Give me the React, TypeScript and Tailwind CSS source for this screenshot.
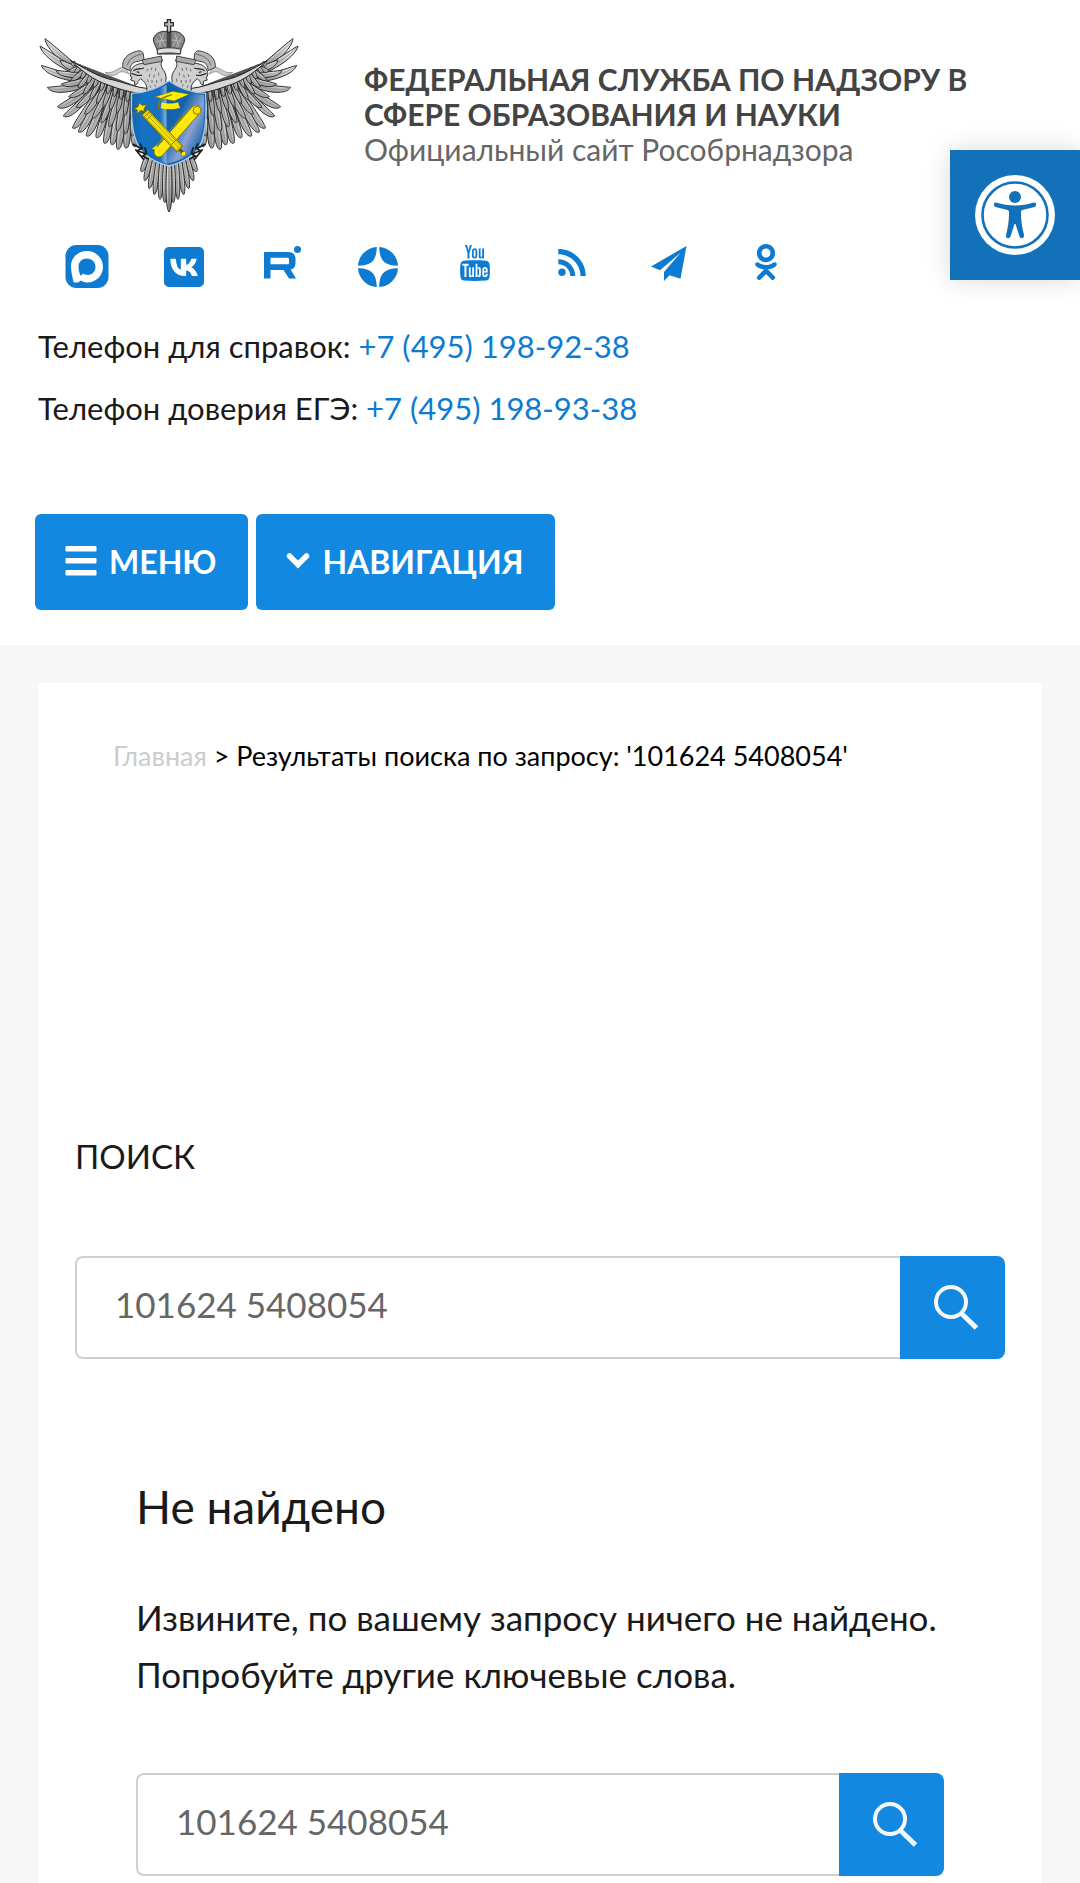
import { useState } from 'react'
import type { ReactNode } from 'react'
import { FaOdnoklassniki } from 'react-icons/fa'
import { TfiYoutube } from 'react-icons/tfi'

type Point = [number, number]

interface FeatherRow {
  roots: Point[]
  tips: Point[]
  width: number
  bend: number
}

const wingRows: FeatherRow[] = [
  {
    width: 12,
    bend: 12,
    roots: [[185, 215], [190, 225], [195, 240], [200, 252], [208, 262], [215, 272], [225, 285], [235, 295], [248, 305], [262, 312], [278, 320], [294, 325], [310, 330], [326, 335], [340, 340]],
    tips: [[75, 116], [60, 138], [64, 196], [82, 262], [112, 320], [130, 348], [158, 384], [176, 396], [200, 408], [230, 413], [254, 430], [276, 434], [294, 448], [318, 444], [345, 440]],
  },
  {
    width: 10,
    bend: 8,
    roots: [[195, 215], [205, 225], [215, 232], [228, 240], [240, 250], [252, 258], [266, 265], [280, 272], [295, 280], [310, 290], [325, 300], [340, 310]],
    tips: [[120, 180], [108, 212], [124, 252], [146, 290], [168, 322], [194, 342], [218, 354], [244, 368], [268, 380], [292, 394], [316, 402], [338, 408]],
  },
  {
    width: 8,
    bend: 4,
    roots: [[180, 200], [196, 208], [212, 216], [228, 224], [244, 232], [260, 240], [276, 248], [292, 254], [308, 260], [324, 266], [342, 272]],
    tips: [[148, 212], [154, 240], [174, 262], [190, 282], [210, 298], [230, 310], [250, 320], [270, 330], [292, 338], [314, 348], [336, 356]],
  },
  {
    width: 7,
    bend: 2,
    roots: [[165, 186], [182, 196], [200, 204], [218, 214], [236, 224], [254, 232], [272, 240], [290, 248], [308, 254], [326, 260], [344, 268]],
    tips: [[156, 196], [166, 218], [184, 236], [202, 250], [222, 262], [242, 272], [262, 282], [282, 290], [302, 298], [322, 306], [340, 314]],
  },
]

const tailRow: FeatherRow = {
  width: 9,
  bend: 4,
  roots: [[385, 460], [395, 465], [405, 470], [415, 475], [425, 478], [436, 480]],
  tips: [[364, 515], [374, 542], [388, 566], [403, 584], [420, 598], [434, 608]],
}

function featherPath([x1, y1]: Point, [x2, y2]: Point, width: number, bend = 0) {
  const dx = x2 - x1
  const dy = y2 - y1
  const len = Math.hypot(dx, dy)
  const nx = -dy / len
  const ny = dx / len
  const at = (t: number, side: number) =>
    `${(x1 + dx * t + nx * side).toFixed(1)} ${(y1 + dy * t + ny * side + bend).toFixed(1)}`
  const root = (side: number) => `${(x1 + nx * side).toFixed(1)} ${(y1 + ny * side).toFixed(1)}`
  return `M${root(width * 0.5)} C${at(0.4, width)} ${at(0.9, width)} ${x2} ${y2} C${at(0.9, -width)} ${at(0.4, -width)} ${root(-width * 0.5)}Z`
}

function Feathers({ row }: { row: FeatherRow }) {
  return (
    <>
      {row.tips.map((tip, index) => (
        <g key={index}>
          <path d={featherPath(row.roots[index], tip, row.width, row.bend)} fill="url(#feather)" stroke="#2b2b2b" strokeWidth="3" />
          <path d={featherPath(row.roots[index], tip, 0.5, row.bend)} fill="none" stroke="#777" strokeWidth="1" />
        </g>
      ))}
    </>
  )
}

function EagleHalf() {
  return (
    <g>
      <path d="M160 185 L380 270 L380 440 L320 400 L220 330 L170 250Z" fill="#555" />
      {wingRows.map((row, index) => (
        <Feathers key={index} row={row} />
      ))}
      <path d="M152 182 C195 205 235 232 280 240 C315 248 345 262 385 266 L383 282 C330 280 290 264 262 254 C220 240 185 212 152 182Z" fill="#d6d6d6" stroke="#222" strokeWidth="3" />
      {/* ribbon */}
      <path d="M256 217 C280 222 288 206 308 201 C318 205 322 212 326 222 C310 212 300 214 292 222 C280 230 266 226 256 217Z" fill="#ccc" stroke="#777" strokeWidth="2" />
      <path d="M308 202 C306 176 324 160 350 154 C360 150 368 154 370 162 L372 180 L346 186 C334 190 330 200 330 212Z" fill="#b5b5b5" stroke="#444" strokeWidth="3" />
      <path d="M322 196 C326 176 342 168 366 162" fill="none" stroke="#666" strokeWidth="3" />
      {/* head and neck */}
      <path d="M380 274 C384 254 372 244 362 236 L354 244 C354 250 350 254 344 256 L344 244 L332 240 L336 232 C328 230 330 214 336 206 C344 194 358 190 374 190 C390 182 402 178 428 180 C418 194 426 204 434 216 C440 228 440 240 434 254 C420 258 402 270 380 274Z" fill="#cfcfcf" stroke="#333" strokeWidth="3" />
      <path d="M366 180 L424 168 L426 184 L372 194Z" fill="#aaa" stroke="#444" strokeWidth="3" />
      <path d="M340 212 C350 204 362 208 372 204 M334 220 L352 226 L366 226 M350 215 L358 218" fill="none" stroke="#333" strokeWidth="4" />
      <path d="M384 206 l-4 8 M396 202 l-3 9 M408 204 l-2 9 M390 222 l-3 9 M403 224 l-2 9 M416 218 l0 9 M382 238 l3 8 M396 240 l0 9 M410 240 l0 9 M424 236 l0 9 M390 256 l2 7 M405 253 l1 7" stroke="#555" strokeWidth="2.4" />
    </g>
  )
}

function Emblem() {
  return (
    <svg viewBox="54 54 786 594" className="w-[262px] shrink-0" role="img" aria-label="Рособрнадзор">
      <defs>
        <linearGradient id="feather" x1="0" y1="0" x2="1" y2="1">
          <stop offset="0" stopColor="#f4f4f4" />
          <stop offset="0.5" stopColor="#bdbdbd" />
          <stop offset="1" stopColor="#747474" />
        </linearGradient>
        <linearGradient id="shieldLeft" x1="0" y1="0" x2="1" y2="0">
          <stop offset="0" stopColor="#1665ae" />
          <stop offset="0.3" stopColor="#1573c4" />
          <stop offset="0.8" stopColor="#176fbd" />
          <stop offset="1" stopColor="#8fb4dc" />
        </linearGradient>
        <linearGradient id="shieldRight" x1="0" y1="0" x2="1" y2="1">
          <stop offset="0" stopColor="#0f5ca3" />
          <stop offset="0.35" stopColor="#1565ad" />
          <stop offset="0.6" stopColor="#8da0d2" />
          <stop offset="0.85" stopColor="#1565ad" />
        </linearGradient>
      </defs>

      <Feathers row={tailRow} />
      <g transform="matrix(-1 0 0 1 894 0)">
        <Feathers row={tailRow} />
      </g>
      <path d={featherPath([447, 485], [447, 636], 11)} fill="url(#feather)" stroke="#252525" strokeWidth="3" />
      <path d="M447 500 V625" stroke="#444" strokeWidth="2" />
      <EagleHalf />
      <g transform="matrix(-1 0 0 1 894 0)">
        <EagleHalf />
      </g>

      {/* crown */}
      <path d="M447 96 C432 90 404 96 400 118 C400 132 412 142 414 162 H480 C482 142 494 132 494 118 C490 96 462 90 447 96Z" fill="#858585" stroke="#333" strokeWidth="3" />
      <path d="M408 112 L426 142 M418 102 L436 140 M430 100 L418 140 M486 112 L468 142 M476 102 L458 140 M464 100 L476 140 M406 126 C430 118 464 118 488 126" stroke="#c8c8c8" strokeWidth="2" fill="none" />
      <path d="M440 96 H454 V146 H440Z" fill="#444" />
      <path d="M412 148 C430 142 464 142 482 148 V162 C464 158 430 158 412 162Z" fill="#ddd" stroke="#333" strokeWidth="3" />
      <path d="M442 59 H452 V68 H460 V78 H452 V96 H442 V78 H434 V68 H442Z" fill="#bbb" stroke="#222" strokeWidth="3.5" />

      {/* shield */}
      <path d="M447 242 C418 264 378 278 335 280 C332 340 336 404 356 440 C376 474 416 490 447 498 C478 490 518 474 538 440 C558 404 560 340 557 280 C516 278 476 264 447 242Z" fill="#1565ad" stroke="#a9cdf0" strokeWidth="4" />
      <path d="M440 254 C412 270 376 282 340 285 C337 345 342 402 360 436 C378 466 412 484 440 491Z" fill="url(#shieldLeft)" />
      <path d="M440 254 C478 270 518 282 552 285 C555 345 552 402 534 436 C516 466 478 484 440 491Z" fill="url(#shieldRight)" />

      {/* graduation cap */}
      <path d="M404 291 L458 274 L508 283 L462 303Z" fill="#ffef08" stroke="#6b6500" strokeWidth="1.5" />
      <path d="M425 307 C440 312 460 312 474 307 L480 324 C462 328 444 330 422 325Z" fill="#ffef08" />
      <path d="M456 284 C430 292 414 294 416 326" fill="none" stroke="#8b8200" strokeWidth="4" />

      {/* scroll */}
      <g strokeLinecap="round">
        <path d="M417 456 L528 330" stroke="#837a00" strokeWidth="31" />
        <path d="M417 456 L528 330" stroke="#ffe90a" strokeWidth="27" />
        <path d="M404 442 L510 324 M398 446 L412 434" stroke="#a89c00" strokeWidth="2.5" />
        <circle cx="531" cy="331" r="12" fill="#f3df12" stroke="#8a8000" strokeWidth="3" />
        <path d="M396 446 L412 436 L408 450Z" fill="#ffe90a" />
      </g>

      {/* mace */}
      <g>
        <path d="M362 324 L496 466" stroke="#655e00" strokeWidth="10" />
        <path d="M374 337 L480 448" stroke="#655e00" strokeWidth="27" />
        <path d="M375 338 L479 447" stroke="#f6e20a" strokeWidth="23" />
        <path d="M368 344 L470 451 M375 338 L477 444 M381 332 L485 441" stroke="#8d8300" strokeWidth="2" />
        <path d="M391 334 L371 352 M398 342 L380 360 M468 420 L450 438 M488 436 L466 456" stroke="#8d8300" strokeWidth="3" />
        <path d="M342 326 L354 320 L358 308 L366 316 L380 314 L372 326 L374 334 L362 332 L350 342 L352 330Z" fill="#f6e20a" stroke="#655e00" strokeWidth="2.5" />
        <circle cx="491" cy="461" r="6" fill="#ffe90a" />
      </g>

      {/* claws */}
      <path d="M338 432 L364 446 L352 452 L378 462 L368 468 L386 478 M360 430 L368 446 M374 442 L380 460 M346 448 L372 480" stroke="#1e1e1e" strokeWidth="5" fill="none" />
      <path d="M556 432 L530 446 L542 452 L516 462 L526 468 L508 478 M534 430 L526 446 M520 442 L514 460 M548 448 L522 480" stroke="#1e1e1e" strokeWidth="5" fill="none" />
    </svg>
  )
}

function IconBox({ children }: { children: ReactNode }) {
  return (
    <svg viewBox="0 0 44 44" className="size-11" fill="currentColor" aria-hidden="true">
      {children}
    </svg>
  )
}

const socials: { label: string; icon: ReactNode }[] = [
  {
    label: 'MAX',
    icon: (
      <IconBox>
        <rect x="0.5" y="1" width="43" height="43" rx="11" />
        <path d="M22 7 C13 7 6 13.5 6 22 C6 28 7.5 33 8.5 38 C11.5 39.5 14 38 16 36.5 C18 38 20 38.5 22.5 38.5 C31 38.5 38 31.5 38 23 C38 14 31 7 22 7Z" fill="#fff" />
        <path d="M22 14.5 C17 14.5 13.5 18 13.5 22.5 C13.5 26 14.2 29 15.5 31.5 C16.5 31.8 17.2 30.5 18 29.5 C25 33.5 30.5 28.5 30.5 23 C30.5 18.5 27 14.5 22 14.5Z" />
      </IconBox>
    ),
  },
  {
    label: 'ВКонтакте',
    icon: (
      <IconBox>
        <rect x="2" y="3" width="40" height="40" rx="5" />
        <path transform="translate(2.3 3.3) scale(1.63)" fill="#fff" stroke="#fff" strokeWidth="0.7" strokeLinejoin="round" d="M6.79 7.3H4.05c.13 6.24 3.25 9.99 8.72 9.99h.31v-3.57c2.01.2 3.53 1.67 4.14 3.57h2.84c-.78-2.84-2.83-4.41-4.11-5.01 1.28-.74 3.08-2.54 3.51-4.98h-2.58c-.56 1.98-2.22 3.78-3.8 3.95V7.3H10.5v6.92c-1.6-.4-3.62-2.34-3.71-6.92Z" />
      </IconBox>
    ),
  },
  {
    label: 'Rutube',
    icon: (
      <IconBox>
        <path fillRule="evenodd" d="M5 8 H29 C34 8 36.500 10.5 36.500 15 V18.5 C36.500 22.5 35 25 31.500 25.5 L37 34.5 H30 L24.500 26 H11.500 V34.5 H5Z M11.500 13.8 V20.2 H28.500 C29.700 20.2 30 19.7 30 18.7 V15.3 C30 14.3 29.700 13.8 28.500 13.8Z" />
        <circle cx="38.5" cy="5.5" r="3.5" />
      </IconBox>
    ),
  },
  {
    label: 'Дзен',
    icon: (
      <IconBox>
        <path d="M20.8 3 A20 20 0 0 0 2 21.8 C14 21.5 20.5 18 20.8 3Z M23.2 3 A20 20 0 0 1 42 21.8 C30 21.5 23.5 18 23.2 3Z M20.8 43 A20 20 0 0 1 2 24.2 C14 24.5 20.5 28 20.8 43Z M23.2 43 A20 20 0 0 0 42 24.2 C30 24.5 23.5 28 23.2 43Z" />
      </IconBox>
    ),
  },
  { label: 'YouTube', icon: <TfiYoutube className="mb-1.5 size-9" aria-hidden="true" /> },
  {
    label: 'RSS',
    icon: (
      <IconBox>
        <circle cx="12" cy="28.3" r="3.7" />
        <path d="M8.3 15.2 C17.5 15.2 25.3 22.5 25.3 32 H20.3 C20.3 25.5 15 20.3 8.3 20.3Z M8.3 5 C23.5 5 35.8 17 35.8 32 H30.6 C30.6 20 20.5 10.2 8.3 10.2Z" />
      </IconBox>
    ),
  },
  {
    label: 'Telegram',
    icon: (
      <IconBox>
        <path d="M39.5 2 L4 22.5 L13 26.2 L33.5 8.8 L17 28 V37 L22.5 31.2 L33.5 34.8Z" />
      </IconBox>
    ),
  },
  { label: 'Одноклассники', icon: <FaOdnoklassniki className="mb-2 size-9" aria-hidden="true" /> },
]

const phones = [
  { label: 'Телефон для справок:', number: '+7 (495) 198-92-38', href: 'tel:+74951989238' },
  { label: 'Телефон доверия ЕГЭ:', number: '+7 (495) 198-93-38', href: 'tel:+74951989338' },
]

function SearchForm() {
  const [query, setQuery] = useState('101624 5408054')

  return (
    <form role="search" className="flex h-[103px]" onSubmit={e => e.preventDefault()}>
      <input
        type="text"
        aria-label="Поиск"
        value={query}
        onChange={e => setQuery(e.target.value)}
        className="min-w-0 flex-1 rounded-l-lg border-2 border-r-0 border-[#cfcfcf] bg-white px-[38px] pb-1.5 text-[35px] text-[#666] outline-none"
      />
      <button
        type="submit"
        aria-label="Найти"
        className="flex w-[105px] shrink-0 items-center justify-center rounded-r-lg bg-[#1388e1]"
      >
        <svg viewBox="0 0 48 48" className="ml-2 size-12" fill="none" stroke="#f7f7f7" aria-hidden="true">
          <circle cx="18" cy="18" r="15" strokeWidth="4" />
          <path d="M28 29 L43.5 44" strokeWidth="5" />
        </svg>
      </button>
    </form>
  )
}

export default function App() {
  return (
    <div className="flex min-h-screen flex-col bg-[#f7f7f7] font-['Lato','Liberation_Sans',sans-serif] text-[#1a1a1a]">
      <header className="bg-white pt-[18px] pb-[35px]">
        <div className="px-[38px]">
          <div className="flex items-start gap-16">
            <Emblem />
            <div className="pt-11 pr-16 leading-[35px]">
              <p className="text-[30px] font-bold text-[#444]">ФЕДЕРАЛЬНАЯ СЛУЖБА ПО НАДЗОРУ В СФЕРЕ ОБРАЗОВАНИЯ И НАУКИ</p>
              <p className="text-[30px] leading-[34px] text-[#666]">Официальный сайт Рособрнадзора</p>
            </div>
          </div>

          <ul className="mt-7 flex text-[#0d7bd1]">
            {socials.map(social => (
              <li key={social.label} className="w-[97px]">
                <a href="#" aria-label={social.label} className="flex h-11 items-center justify-center">
                  {social.icon}
                </a>
              </li>
            ))}
          </ul>

          <div className="mt-[27px] text-[31px] leading-[62px]">
            {phones.map(phone => (
              <p key={phone.href}>
                {phone.label} <a href={phone.href} className="text-[#0d7bd1]">{phone.number}</a>
              </p>
            ))}
          </div>
        </div>

        <div className="mt-[75px] flex gap-2 px-[35px] text-[32px] font-bold text-white">
          <button type="button" className="flex h-24 items-center gap-3 rounded-md bg-[#1388e1] pr-8 pl-[30px]">
            <svg viewBox="0 0 32 32" className="w-8" fill="currentColor" aria-hidden="true">
              <rect x="0.5" y="0" width="31" height="5.5" rx="1" />
              <rect x="0.5" y="12" width="31" height="5.5" rx="1" />
              <rect x="0.5" y="24" width="31" height="5.5" rx="1" />
            </svg>
            МЕНЮ
          </button>
          <button type="button" className="flex h-24 items-center gap-3 rounded-md bg-[#1388e1] pr-8 pl-[30px]">
            <svg viewBox="0 0 24 20" className="w-6" fill="none" stroke="currentColor" strokeWidth="5.5" aria-hidden="true">
              <path d="M3.500 4 L12 12.5 L20.500 4" strokeLinecap="round" />
            </svg>
            НАВИГАЦИЯ
          </button>
        </div>
      </header>

      <main className="mx-[38px] mt-[38px] flex-1 bg-white px-[37px] pt-[55px]">
        <nav aria-label="Навигационная цепочка" className="px-[38px] text-[27px] leading-9 text-black">
          <a href="#" className="text-[#ccc]">Главная</a> &gt; Результаты поиска по запросу: '101624 5408054'
        </nav>

        <h2 className="mt-[357px] text-[33px] leading-[50px]">ПОИСК</h2>
        <div className="mt-[75px]">
          <SearchForm />
        </div>

        <section className="mt-[113px] px-[61px]">
          <h1 className="text-[46px] leading-[70px]">Не найдено</h1>
          <p className="mt-[47px] text-[35px] leading-[57px]">
            Извините, по вашему запросу ничего не найдено. Попробуйте другие ключевые слова.
          </p>
          <div className="mt-[70px]">
            <SearchForm />
          </div>
        </section>
      </main>

      <button
        type="button"
        aria-label="Специальные возможности"
        className="fixed top-[150px] right-0 flex size-[130px] items-center justify-center bg-[#1371b9] shadow-[0_0_25px_rgba(0,0,0,0.15)]"
      >
        <svg viewBox="0 0 80 80" className="size-20" aria-hidden="true">
          <circle cx="40" cy="40" r="40" fill="#fff" />
          <circle cx="40" cy="40" r="32.5" fill="none" stroke="#1371b9" strokeWidth="2.6" />
          <circle cx="40" cy="22" r="6" fill="#1371b9" />
          <path d="M21 27.5 C34 31.5 46 31.5 59 27.5 C61.5 27 62 31 59.5 32 L47.5 35 C46 35.5 46 36 46 38 C46 46 47 52 49 60 C49.5 63.5 45.5 64.5 44.5 61.5 L40.5 49 H39.5 L35.5 61.5 C34.5 64.5 30.5 63.5 31 60 C33 52 34 46 34 38 C34 36 34 35.5 32.5 35 L20.5 32 C18 31 18.5 27 21 27.5Z" fill="#1371b9" />
        </svg>
      </button>
    </div>
  )
}
